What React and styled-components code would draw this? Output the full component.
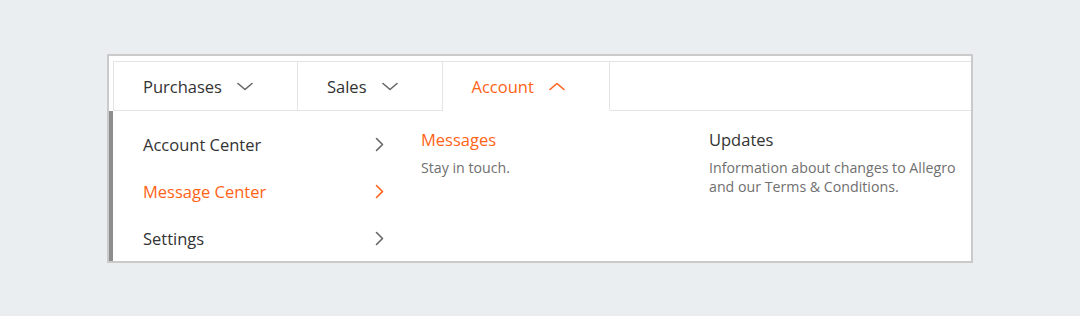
import React from 'react';
import styled, { createGlobalStyle } from 'styled-components';

const Global = createGlobalStyle`
  body {
    margin: 0;
    background: #ebeef1;
    font-family: "Open Sans", "Liberation Sans", sans-serif;
  }
`;

const Page = styled.div`
  padding: 54px 0 0 107px;
`;

const Box = styled.div`
  width: 862px;
  background: #fff;
  border: 2px solid #cacaca;
  padding-top: 5px;
`;

const TabBar = styled.div`
  display: flex;
  margin-left: 4px;
  border-top: 1px solid #e4e4e4;
  border-left: 1px solid #e4e4e4;
`;

const Tab = styled.div`
  display: flex;
  align-items: center;
  gap: 15px;
  height: 47px;
  padding: 1px 44px 0 29px;
  border-right: 1px solid #e4e4e4;
  border-bottom: 1px solid ${p => (p.$active ? '#fff' : '#e4e4e4')};
  font-size: 16.5px;
  color: ${p => (p.$active ? '#ff6316' : '#333')};
  cursor: pointer;
`;

const Filler = styled.div`
  flex: 1;
  border-bottom: 1px solid #e4e4e4;
`;

const Body = styled.div`
  display: flex;
  height: 150px;
  border-left: 4px solid #8d8d8d;
`;

const Nav = styled.ul`
  list-style: none;
  margin: 0;
  padding: 10px 0 0 0;
  width: 284px;
`;

const NavItem = styled.li`
  display: flex;
  align-items: center;
  justify-content: space-between;
  height: 47px;
  padding: 0 13px 0 30px;
  font-size: 16.5px;
  color: ${p => (p.$active ? '#ff6316' : '#333')};
  cursor: pointer;
`;

const Panel = styled.div`
  width: ${p => p.$width}px;
  padding-top: 18px;
  margin-left: ${p => p.$offset}px;
`;

const PanelTitle = styled.div`
  font-size: 16.5px;
  line-height: 22px;
  color: ${p => (p.$active ? '#ff6316' : '#333')};
`;

const PanelText = styled.p`
  margin: 7px 0 0;
  font-size: 14.2px;
  line-height: 19px;
  color: #6f6f6f;
`;

const Chevron = ({ dir = 'down', color = '#666' }) => {
  const paths = {
    down: 'M1 1.5 L8 7.5 L15 1.5',
    up: 'M1 7.5 L8 1.5 L15 7.5',
  };
  return (
    <svg width="16" height="9" viewBox="0 0 16 9" fill="none">
      <path d={paths[dir]} stroke={color} strokeWidth="1.6" strokeLinecap="round" strokeLinejoin="round" />
    </svg>
  );
};

const RightChevron = ({ color = '#666' }) => (
  <svg width="9" height="15" viewBox="0 0 9 15" fill="none">
    <path d="M1.5 1.5 L7.5 7.5 L1.5 13.5" stroke={color} strokeWidth="1.6" strokeLinecap="round" strokeLinejoin="round" />
  </svg>
);

const tabs = [
  { label: 'Purchases' },
  { label: 'Sales' },
  { label: 'Account', active: true },
];

const navItems = [
  { label: 'Account Center' },
  { label: 'Message Center', active: true },
  { label: 'Settings' },
];

export default function App() {
  return (
    <Page>
      <Global />
      <Box>
        <TabBar>
          {tabs.map(t => (
            <Tab key={t.label} $active={t.active}>
              {t.label}
              <Chevron dir={t.active ? 'up' : 'down'} color={t.active ? '#ff6316' : '#666'} />
            </Tab>
          ))}
          <Filler />
        </TabBar>
        <Body>
          <Nav>
            {navItems.map(n => (
              <NavItem key={n.label} $active={n.active}>
                {n.label}
                <RightChevron color={n.active ? '#ff6316' : '#666'} />
              </NavItem>
            ))}
          </Nav>
          <Panel $width={288} $offset={24}>
            <PanelTitle $active>Messages</PanelTitle>
            <PanelText>Stay in touch.</PanelText>
          </Panel>
          <Panel $width={262} $offset={0}>
            <PanelTitle>Updates</PanelTitle>
            <PanelText>Information about changes to Allegro and our Terms &amp; Conditions.</PanelText>
          </Panel>
        </Body>
      </Box>
    </Page>
  );
}
